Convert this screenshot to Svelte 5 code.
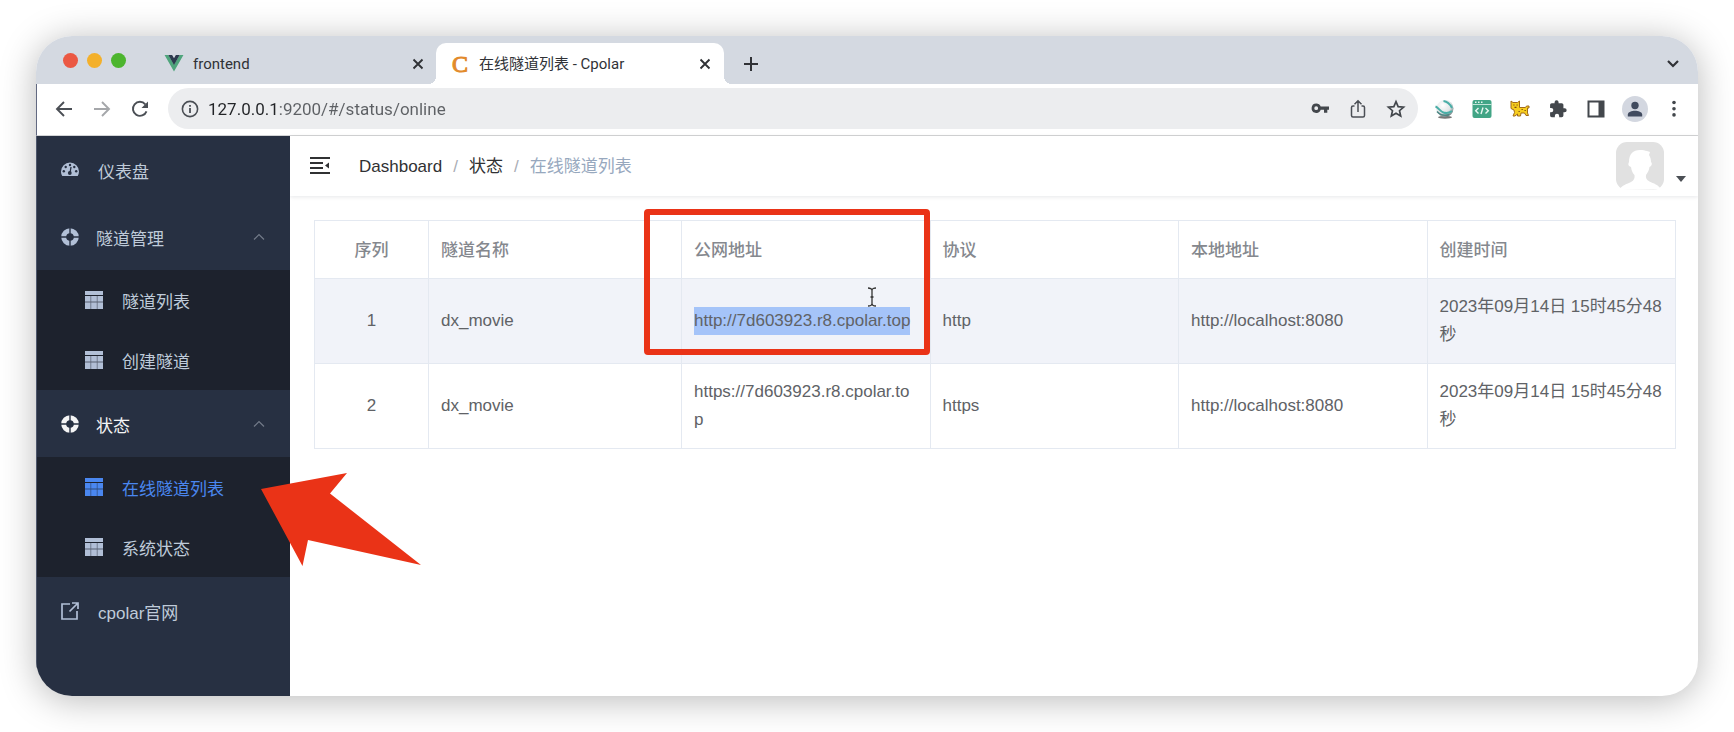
<script lang="ts">
	type Tunnel = {
		id: number;
		name: string;
		url: string;
		protocol: string;
		local: string;
		created: string;
	};

	const tunnels: Tunnel[] = [
		{
			id: 1,
			name: 'dx_movie',
			url: 'http://7d603923.r8.cpolar.top',
			protocol: 'http',
			local: 'http://localhost:8080',
			created: '2023年09月14日 15时45分48秒'
		},
		{
			id: 2,
			name: 'dx_movie',
			url: 'https://7d603923.r8.cpolar.top',
			protocol: 'https',
			local: 'http://localhost:8080',
			created: '2023年09月14日 15时45分48秒'
		}
	];

	const groups = [
		{ title: '隧道管理', active: false, items: ['隧道列表', '创建隧道'] },
		{ title: '状态', active: true, items: ['在线隧道列表', '系统状态'] }
	];

	const current = '在线隧道列表';

	let address = $state('127.0.0.1:9200/#/status/online');
	let selected = $state(1);
</script>

{#snippet cross()}
	<svg width="12" height="12" viewBox="0 0 12 12"><path d="M1.5 1.5l9 9M10.500 1.500l-9 9" fill="none" stroke="currentColor" stroke-width="1.900" /></svg>
{/snippet}

<div class="window">
	<header class="tabs">
		<div class="lights">
			<span class="light red"></span>
			<span class="light yellow"></span>
			<span class="light green"></span>
		</div>
		<div class="tab">
			<svg width="20" height="17" viewBox="0 0 20 18">
				<path d="M0 0h4l6 10 6-10h4L10 17.500z" fill="#4fa57c" />
				<path d="M4 0h4l2 3.500L12 0h4l-6 10.500z" fill="#2c3a4e" />
			</svg>
			<span class="tab-title">frontend</span>
			<button aria-label="Close frontend">{@render cross()}</button>
		</div>
		<div class="tab active">
			<span class="favicon">C</span>
			<span class="tab-title">在线隧道列表 - Cpolar</span>
			<button aria-label="Close Cpolar">{@render cross()}</button>
		</div>
		<button class="new-tab" aria-label="New tab">
			<svg width="14" height="14" viewBox="0 0 14 14"><path d="M7 0v14M0 7h14" stroke="currentColor" stroke-width="2" /></svg>
		</button>
		<button class="tab-search" aria-label="Search tabs">
			<svg width="12" height="8" viewBox="0 0 12 8"><path d="M1 1l5 5 5-5" fill="none" stroke="currentColor" stroke-width="2.200" /></svg>
		</button>
	</header>

	<div class="toolbar">
		<div class="nav-buttons">
			<button aria-label="Back">
				<svg width="18" height="18" viewBox="0 0 18 18"><path d="M17 9H2M9 2L2 9l7 7" fill="none" stroke="#4b4f55" stroke-width="1.900" /></svg>
			</button>
			<button aria-label="Forward">
				<svg width="18" height="18" viewBox="0 0 18 18"><path d="M1 9h15M9 2l7 7-7 7" fill="none" stroke="#a5a7aa" stroke-width="1.900" /></svg>
			</button>
			<button aria-label="Reload">
				<svg width="18" height="18" viewBox="0 0 18 18">
					<path d="M15.500 11.300A7 7 0 1 1 14.300 4.300" fill="none" stroke="#4b4f55" stroke-width="1.900" />
					<path d="M17 1.500v6.500h-6.500z" fill="#4b4f55" />
				</svg>
			</button>
		</div>
		<div class="omnibox">
			<svg width="18" height="18" viewBox="0 0 18 18">
				<circle cx="9" cy="9" r="7.600" fill="none" stroke="#4b4f55" stroke-width="1.600" />
				<path d="M9 8v5M9 5v1.800" stroke="#4b4f55" stroke-width="1.800" />
			</svg>
			<input aria-label="Address" bind:value={address} />
			<button aria-label="Passwords">
				<svg width="20" height="20" viewBox="0 0 20 20">
					<path fill-rule="evenodd" d="M6.200 4.500a4.700 4.700 0 1 0 4.500 6.300H14v2.900h3.300v-2.900H19V7.600h-8.300A4.700 4.700 0 0 0 6.200 4.500zM6.200 7.300a1.900 1.900 0 1 1 0 3.800 1.900 1.900 0 0 1 0-3.800z" fill="#43474c" />
				</svg>
			</button>
			<button aria-label="Share">
				<svg width="20" height="20" viewBox="0 0 20 20">
					<path d="M6.500 7H5a1.500 1.500 0 0 0-1.500 1.500v8A1.500 1.500 0 0 0 5 18h10a1.500 1.500 0 0 0 1.500-1.500v-8A1.500 1.500 0 0 0 15 7h-1.500M10 13V2M6.500 5.300L10 1.800l3.500 3.500" fill="none" stroke="#4b4f55" stroke-width="1.500" />
				</svg>
			</button>
			<button aria-label="Bookmark">
				<svg width="20" height="20" viewBox="0 0 20 20">
					<path d="M10 2.600l2.150 5 5.450.5-4.100 3.600 1.200 5.300-4.700-2.800L5.300 17l1.200-5.300-4.100-3.600 5.450-.5z" fill="none" stroke="#43474c" stroke-width="1.700" />
				</svg>
			</button>
		</div>
		<div class="extensions">
			<button aria-label="Globe extension">
				<svg width="20" height="20" viewBox="0 0 20 20">
					<defs>
						<radialGradient id="ball" cx="40%" cy="30%" r="75%">
							<stop offset="0" stop-color="#ffffff" />
							<stop offset="0.600" stop-color="#dfe5e6" />
							<stop offset="1" stop-color="#66787a" />
						</radialGradient>
					</defs>
					<ellipse cx="11" cy="18.300" rx="7" ry="1.500" fill="#777" />
					<path d="M11 1a8.500 8.500 0 0 1 0 17c-4 0-6.500-2-8-5.500L1.500 8l4-5A9 9 0 0 1 11 1z" fill="url(#ball)" />
					<path d="M1.500 7.500c3 1 4 4.500 8 6 3 1 6 .3 8.500-1.500" fill="none" stroke="#4aaea7" stroke-width="2" />
					<path d="M9.500 2c4 .5 6.500 3 8.500 7" fill="none" stroke="#4aaea7" stroke-width="2" />
					<path d="M3 12.500c3 3.500 8 4.500 12.500 3" fill="none" stroke="#4d8784" stroke-width="1.500" />
				</svg>
			</button>
			<button aria-label="Code extension">
				<svg width="20" height="20" viewBox="0 0 20 20">
					<rect x="0.500" y="1" width="19" height="18" rx="2" fill="#42a586" />
					<path d="M.5 5.500h19" stroke="#bfe3d6" stroke-width="1" />
					<path d="M3 3.300h1.500M6 3.300h1.500M9 3.300h1.500" stroke="#e5f5ef" stroke-width="1.500" />
					<path d="M6.500 9L3.700 11.800l2.800 2.700M13.500 9l2.800 2.800-2.800 2.700M11 8.500l-2 6.500" fill="none" stroke="#e8f7f1" stroke-width="1.400" />
				</svg>
			</button>
			<button aria-label="Cat extension">
				<svg width="20" height="20" viewBox="0 0 20 20">
					<path d="M1 2l2 1.500h4.500L9.500 2v6.500h6L16.500 7H19v2h-1.500v5l1 2.500h-2.500l-1.500-2.500h-3.500l-.5 3H7.500V15L5 17H3l1.500-3.500L4 11 1 9.500z" fill="#f6cd1f" stroke="#a06a1c" stroke-width="1" />
					<path d="M3.300 6h1.200M6.500 6h1.200M4.500 8.300h2M11.500 10.500h1.300M14.500 11.500h1.300M8.500 12.500h1.300" stroke="#7a4a12" stroke-width="1.200" />
				</svg>
			</button>
			<button aria-label="Extensions">
				<svg width="20" height="20" viewBox="0 0 24 24">
					<path d="M20 11h-1.500V7a2 2 0 0 0-2-2h-3.800V3.800a2.400 2.400 0 0 0-4.800 0V5H4.500a2 2 0 0 0-2 2v3.700h1.300a2.600 2.600 0 0 1 0 5.200H2.500v3.900a2 2 0 0 0 2 2h3.700v-1.500a2.600 2.600 0 0 1 5.200 0v1.500h3.100a2 2 0 0 0 2-2v-4H20a2.400 2.400 0 0 0 0-4.800z" fill="#43474c" />
				</svg>
			</button>
			<button aria-label="Side panel">
				<svg width="20" height="20" viewBox="0 0 20 20">
					<path fill-rule="evenodd" d="M1.500 1.500h17v17h-17zM3.500 3.500v13h9v-13z" fill="#43474c" />
				</svg>
			</button>
			<button class="profile" aria-label="Profile">
				<svg width="26" height="26" viewBox="0 0 26 26">
					<circle cx="13" cy="13" r="13" fill="#d3d7e0" />
					<circle cx="13" cy="9.500" r="3.700" fill="#414b5f" />
					<path d="M5.800 20.500v-2c0-2.600 4.200-3.800 7.200-3.800s7.200 1.200 7.200 3.800v2z" fill="#414b5f" />
				</svg>
			</button>
			<button aria-label="Menu">
				<svg width="20" height="20" viewBox="0 0 20 20" fill="#43474c">
					<circle cx="10" cy="3.500" r="1.800" /><circle cx="10" cy="9.700" r="1.800" /><circle cx="10" cy="15.900" r="1.800" />
				</svg>
			</button>
		</div>
	</div>

	<div class="app">
		<nav class="sidebar">
			<a class="item link" href="#/dashboard">
				<svg width="18" height="18" viewBox="0 0 18 18">
					<path d="M9 1.500a9 9 0 0 0-9 9c0 1.800.5 3.400 1.300 4.500h15.400a9 9 0 0 0 1.300-4.500 9 9 0 0 0-9-9z" fill="currentColor" />
					<g fill="#273042">
						<circle cx="9" cy="4" r="1.200" /><circle cx="4.700" cy="6" r="1.200" /><circle cx="13.300" cy="6" r="1.200" />
						<circle cx="2.800" cy="10.300" r="1.200" /><circle cx="15.200" cy="10.300" r="1.200" /><circle cx="8.800" cy="12" r="1.900" />
					</g>
					<path d="M9 12l1-6" stroke="#273042" stroke-width="1.300" />
				</svg>
				<span>仪表盘</span>
			</a>
			{#each groups as group}
				<button class="item group" class:open={group.active}>
					<svg width="18" height="18" viewBox="0 0 18 18">
						<circle cx="9" cy="9" r="6.300" fill="none" stroke="currentColor" stroke-width="5" />
						<path d="M9 0v18M0 9h18" stroke="#273042" stroke-width="1.400" />
					</svg>
					<span>{group.title}</span>
					<svg class="arrow" width="12" height="8" viewBox="0 0 12 8"><path d="M1 6.500l5-5 5 5" fill="none" stroke="#737b89" stroke-width="1.200" /></svg>
				</button>
				<ul>
					{#each group.items as item}
						<li>
							<a class:current={item === current} href="#/{item}">
								<svg width="18" height="18" viewBox="0 0 18 18" fill="currentColor">
									<path d="M0 0h18v4H0zM0 5h5.500v5.500H0zM6.200 5h5.600v5.500H6.200zM12.500 5H18v5.500h-5.500zM0 11.500h5.500V18H0zM6.200 11.500h5.600V18H6.200zM12.500 11.500H18V18h-5.500z" />
									<path d="M5 5h8v13H5zM0 10h18v2H0z" opacity="0.400" />
								</svg>
								<span>{item}</span>
							</a>
							{#if item === current}
								<svg class="pointer" width="160" height="93" viewBox="0 0 160 93"><path d="M0 16L86 0 69 20.500 160 92 47 67 41.500 93z" fill="#ea3317" /></svg>
							{/if}
						</li>
					{/each}
				</ul>
			{/each}
			<a class="item link" href="https://www.cpolar.com">
				<svg width="18" height="18" viewBox="0 0 18 18" fill="none" stroke="currentColor" stroke-width="1.700">
					<path d="M9 2H1v15h15V9M11 1h6v6M17 1L8.500 9.500" />
				</svg>
				<span>cpolar官网</span>
			</a>
		</nav>

		<section class="content">
			<div class="navbar">
				<button aria-label="Collapse menu">
					<svg width="20" height="18" viewBox="0 0 20 18">
						<path d="M0 1h20M0 6h13M0 11h13M0 16h20" stroke="#303133" stroke-width="1.800" />
						<path d="M19 5.500v6l-4-3z" fill="#303133" />
					</svg>
				</button>
				<ol class="breadcrumb">
					<li><a href="#/dashboard">Dashboard</a></li>
					<li><a href="#/status">状态</a></li>
					<li>{current}</li>
				</ol>
				<button class="user" aria-label="Account">
					<svg width="48" height="48" viewBox="0 0 48 48">
						<rect width="48" height="48" rx="11" fill="#e1e1e1" />
						<path d="M3 48c3-5 8-6 12-8 3-1.500 4-4 3.500-7-1.500-1.500-3-4-3.500-8-3-1-3-3-2-5C13 12 17 8 24 8c3 0 5 .5 7 1l3 1-1 3c1.500 2 2 5 2 7 1.500 1 1 4-1.500 5-.5 3-1.500 5.500-3.500 8-.5 3 .5 5 3.500 6.500 4 2 9 3 11.500 8z" fill="#fff" />
					</svg>
					<svg class="caret" width="10" height="6" viewBox="0 0 10 6"><path d="M0 0h10L5 6z" fill="#4b4f55" /></svg>
				</button>
			</div>

			<main>
				<table>
					<colgroup>
						<col class="col-index" />
						<col class="col-name" />
						<col span="4" />
					</colgroup>
					<thead>
						<tr>
							<th class="center">序列</th>
							<th>隧道名称</th>
							<th class="framed">公网地址<span class="frame"></span></th>
							<th>协议</th>
							<th>本地地址</th>
							<th>创建时间</th>
						</tr>
					</thead>
					<tbody>
						{#each tunnels as tunnel}
							<tr class:hover={tunnel.id === selected}>
								<td class="center">{tunnel.id}</td>
								<td>{tunnel.name}</td>
								<td class="url">
									{#if tunnel.id === selected}
										<mark>{tunnel.url}</mark>
										<svg class="cursor" width="10" height="20" viewBox="0 0 10 20">
											<path d="M1 1c2 0 4 .5 4 2.500C5 1.500 7 1 9 1M5 3v14M1 19c2 0 4-.5 4-2.500C5 18.500 7 19 9 19M3.500 10h3" fill="none" stroke="#333" stroke-width="1.300" />
										</svg>
									{:else}
										{tunnel.url}
									{/if}
								</td>
								<td>{tunnel.protocol}</td>
								<td>{tunnel.local}</td>
								<td>{tunnel.created}</td>
							</tr>
						{/each}
					</tbody>
				</table>
			</main>
		</section>
	</div>
</div>

<style>
	:global(body) {
		background: #fff;
	}

	.window {
		display: flex;
		flex-direction: column;
		box-sizing: border-box;
		min-height: calc(100vh - 72px);
		margin: 36px;
		border-radius: 36px;
		overflow: hidden;
		background: #fff;
		box-shadow: 0 4px 36px rgba(0, 0, 0, 0.28);
		font-family: 'Liberation Sans', 'Noto Sans CJK SC', sans-serif;
		font-size: 17px;
		line-height: 28px;
		color: #606266;
	}

	button {
		display: flex;
		align-items: center;
		padding: 0;
		border: 0;
		background: none;
		color: inherit;
		font: inherit;
		cursor: pointer;
	}

	a {
		color: inherit;
		text-decoration: none;
	}

	svg {
		display: block;
		flex: none;
	}

	.tabs {
		display: flex;
		align-items: flex-end;
		height: 48px;
		background: #d4d9e1;
		color: #303236;
		font-family: Roboto, 'Noto Sans CJK SC', sans-serif;
		font-size: 15px;
	}

	.lights {
		display: flex;
		align-self: center;
		gap: 9px;
		padding: 0 30px 0 27px;
	}

	.light {
		width: 15px;
		height: 15px;
		border-radius: 50%;
	}

	.red {
		background: #eb5843;
	}

	.yellow {
		background: #f3b02b;
	}

	.green {
		background: #4cb52e;
	}

	.tab {
		position: relative;
		display: flex;
		align-items: center;
		gap: 9px;
		box-sizing: border-box;
		width: 280px;
		height: 41px;
		padding: 0 12px 0 8px;
	}

	.tab.active {
		width: 288px;
		padding: 0 13px 0 16px;
		border-radius: 10px 10px 0 0;
		background: #fff;
	}

	.tab.active::before,
	.tab.active::after {
		content: '';
		position: absolute;
		bottom: 0;
		width: 8px;
		height: 8px;
	}

	.tab.active::before {
		right: 100%;
		background: radial-gradient(circle at 0 0, transparent 8px, #fff 8px);
	}

	.tab.active::after {
		left: 100%;
		background: radial-gradient(circle at 100% 0, transparent 8px, #fff 8px);
	}

	.tab-title {
		flex: 1;
	}

	.favicon {
		width: 18px;
		color: #e28a2b;
		font-family: 'Liberation Serif', serif;
		font-size: 24px;
		-webkit-text-stroke: 1px #e28a2b;
	}

	.new-tab {
		height: 41px;
		margin-left: 20px;
	}

	.tab-search {
		height: 41px;
		margin: 0 19px 0 auto;
	}

	.toolbar {
		display: flex;
		align-items: center;
		box-sizing: border-box;
		height: 52px;
		padding: 0 14px 2px 18px;
		border-bottom: 1px solid #d3d4d6;
		border-left: 1px solid #626981;
	}

	.nav-buttons {
		display: flex;
		gap: 20px;
	}

	.omnibox {
		display: flex;
		flex: 1;
		align-items: center;
		gap: 18px;
		height: 41px;
		margin: 0 16px 0 19px;
		padding: 0 12px 0 13px;
		border-radius: 21px;
		background: #ecedef;
	}

	/* the host part of the address is darker than its port and path */
	.omnibox input {
		flex: 1;
		min-width: 0;
		margin-left: -9px;
		padding: 0;
		border: 0;
		outline: 0;
		background: linear-gradient(90deg, #222427 72px, #5d6064 72px);
		background-clip: text;
		color: transparent;
		font-family: Roboto, sans-serif;
		font-size: 17px;
		line-height: 28px;
	}

	.extensions {
		display: flex;
		align-items: center;
		gap: 18px;
	}

	.profile {
		margin: 0 -2px;
	}

	.app {
		display: flex;
		flex: 1;
	}

	.sidebar {
		position: relative;
		z-index: 1;
		flex: none;
		box-sizing: border-box;
		width: 254px;
		border-left: 1px solid #4d566b;
		background: #273042;
		color: #bfcbd9;
	}

	.item {
		display: flex;
		align-items: center;
		gap: 19px;
		box-sizing: border-box;
		width: 100%;
		height: 67px;
		padding: 0 25px 0 24px;
		text-align: left;
	}

	.item > svg:first-child,
	.sidebar li svg {
		color: #b1bfd6;
	}

	.sidebar span {
		padding-top: 6px;
	}

	.group {
		gap: 17px;
	}

	.group.open,
	.group.open > svg:first-child {
		color: #f4f4f5;
	}

	.arrow {
		margin-left: auto;
	}

	.sidebar ul {
		margin: 0;
		padding: 0;
		background: #1d222d;
		list-style: none;
	}

	.sidebar li {
		position: relative;
	}

	.sidebar li a {
		display: flex;
		align-items: center;
		gap: 19px;
		height: 60px;
		padding-left: 48px;
	}

	.sidebar li .current,
	.sidebar li .current svg {
		color: #4a87f0;
	}

	.pointer {
		position: absolute;
		top: 16px;
		left: 224px;
		pointer-events: none;
	}

	.content {
		flex: 1;
		min-width: 0;
	}

	.navbar {
		display: flex;
		align-items: center;
		height: 60px;
		padding: 0 12px 0 20px;
		box-shadow: 0 1px 4px rgba(0, 21, 41, 0.1);
	}

	.breadcrumb {
		display: flex;
		flex: 1;
		margin: 0;
		padding: 2px 0 0 29px;
		color: #97a8be;
		list-style: none;
	}

	.breadcrumb a {
		color: #303133;
	}

	.breadcrumb li + li::before {
		content: '/';
		margin: 0 11px;
		color: #a9adb5;
	}

	.user {
		align-items: flex-end;
		gap: 12px;
	}

	.caret {
		margin-bottom: 8px;
	}

	main {
		padding: 24px 22px 24px 24px;
	}

	table {
		width: 100%;
		border-collapse: collapse;
		table-layout: fixed;
	}

	.col-index {
		width: 114px;
	}

	.col-name {
		width: 253px;
	}

	th,
	td {
		padding: 14px 12px;
		border: 1px solid #e4e9f1;
		text-align: left;
		word-break: break-all;
	}

	th {
		padding: 16px 12px 13px;
		color: #85888e;
		font-weight: 500;
	}

	.center {
		text-align: center;
	}

	.hover {
		background: #f1f3f9;
	}

	.framed,
	.url {
		position: relative;
	}

	.frame {
		position: absolute;
		top: -12px;
		right: 0;
		left: -38px;
		z-index: 1;
		box-sizing: border-box;
		height: 146px;
		border: 6px solid #ea3317;
		border-radius: 4px;
	}

	mark {
		display: inline-block;
		background: #a5c4f9;
		color: inherit;
		vertical-align: top;
	}

	.cursor {
		position: absolute;
		top: 8px;
		right: 53px;
	}
</style>
